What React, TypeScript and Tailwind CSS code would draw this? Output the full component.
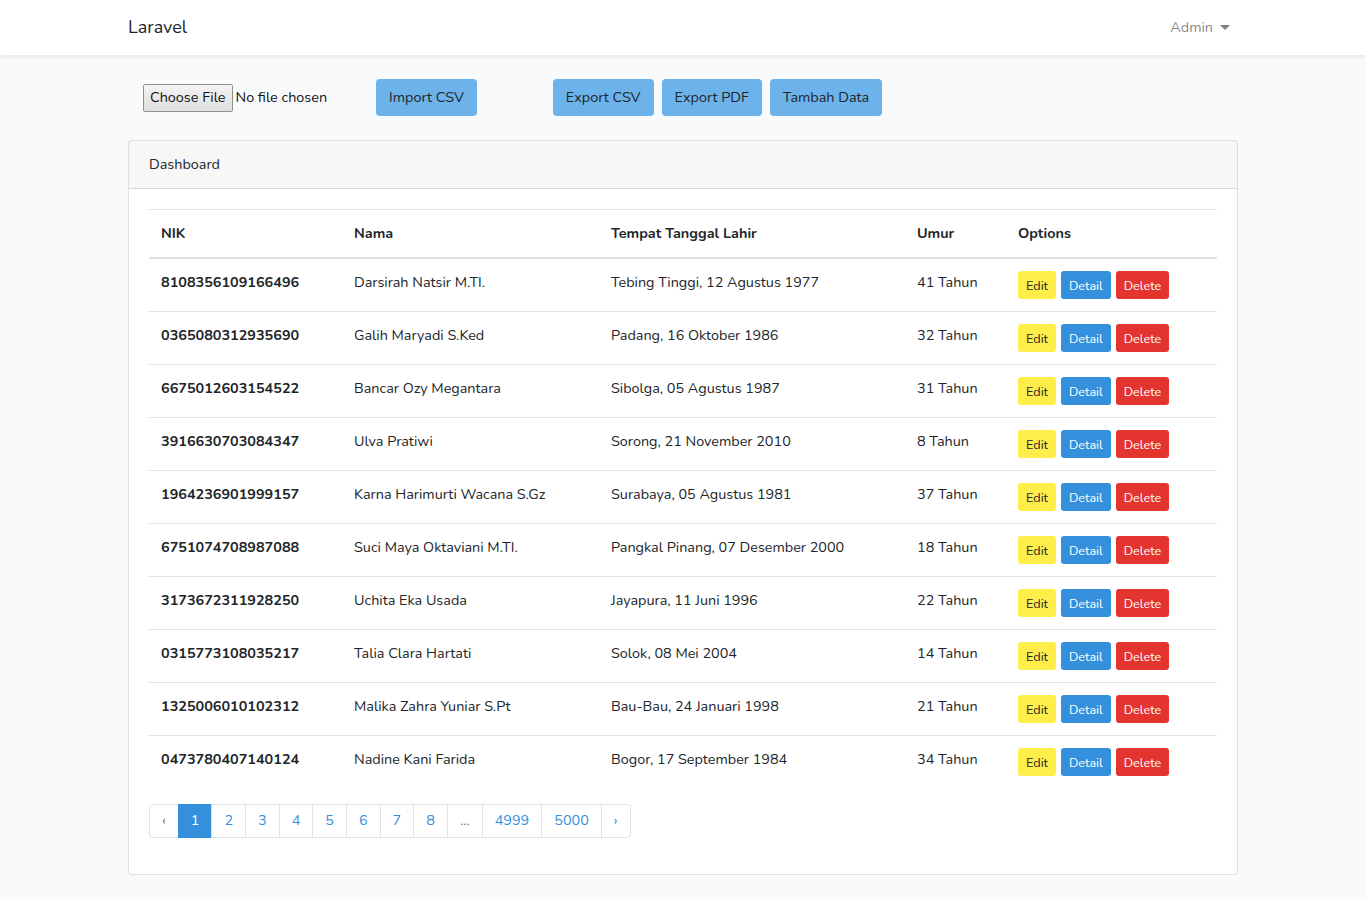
const rows = [
  ["8108356109166496", "Darsirah Natsir M.TI.", "Tebing Tinggi, 12 Agustus 1977", "41 Tahun"],
  ["0365080312935690", "Galih Maryadi S.Ked", "Padang, 16 Oktober 1986", "32 Tahun"],
  ["6675012603154522", "Bancar Ozy Megantara", "Sibolga, 05 Agustus 1987", "31 Tahun"],
  ["3916630703084347", "Ulva Pratiwi", "Sorong, 21 November 2010", "8 Tahun"],
  ["1964236901999157", "Karna Harimurti Wacana S.Gz", "Surabaya, 05 Agustus 1981", "37 Tahun"],
  ["6751074708987088", "Suci Maya Oktaviani M.TI.", "Pangkal Pinang, 07 Desember 2000", "18 Tahun"],
  ["3173672311928250", "Uchita Eka Usada", "Jayapura, 11 Juni 1996", "22 Tahun"],
  ["0315773108035217", "Talia Clara Hartati", "Solok, 08 Mei 2004", "14 Tahun"],
  ["1325006010102312", "Malika Zahra Yuniar S.Pt", "Bau-Bau, 24 Januari 1998", "21 Tahun"],
  ["0473780407140124", "Nadine Kani Farida", "Bogor, 17 September 1984", "34 Tahun"],
];

const pages = ["1", "2", "3", "4", "5", "6", "7", "8", "...", "4999", "5000"];

function InfoBtn({ children, className = "" }: { children: React.ReactNode; className?: string }) {
  return (
    <button className={`h-[37px] px-[13px] rounded-[4px] bg-[#6cb2eb] text-[#212529] text-[14.4px] leading-[23px] ${className}`}>
      {children}
    </button>
  );
}

export default function App() {
  return (
    <div
      className="min-h-screen bg-[#f8fafc] text-[#212529] text-[14.4px]"
      style={{ fontFamily: "Nunito, Lato, 'Noto Sans', sans-serif" }}
    >
      <nav className="h-[55px] bg-white shadow-[0_2px_4px_rgba(0,0,0,0.075)]">
        <div className="w-[1110px] mx-auto h-full flex items-center justify-between">
          <span className="text-[18px] text-[#212529]">Laravel</span>
          <span className="flex items-center gap-[6px] pr-2 text-[rgba(0,0,0,0.5)]">
            Admin
            <span className="w-0 h-0 border-x-[5px] border-x-transparent border-t-[5px] border-t-[rgba(0,0,0,0.5)] ml-[1px]" />
          </span>
        </div>
      </nav>

      <main className="w-[1110px] mx-auto pt-6">
        <div className="flex items-center h-[37px]">
          <div className="flex items-center ml-[15px] w-[233px]">
            <span className="h-[28px] px-[6px] flex items-center border border-[#8f8f8f] rounded-[2px] bg-gradient-to-b from-[#f4f4f4] to-[#dedede] text-[#111]">
              Choose File
            </span>
            <span className="ml-[3px] text-[#111]">No file chosen</span>
          </div>
          <InfoBtn>Import CSV</InfoBtn>
          <InfoBtn className="ml-[76px]">Export CSV</InfoBtn>
          <InfoBtn className="ml-2">Export PDF</InfoBtn>
          <InfoBtn className="ml-2">Tambah Data</InfoBtn>
        </div>

        <div className="mt-6 bg-white border border-[rgba(0,0,0,0.125)] rounded-[4px]">
          <div className="h-[48px] px-5 flex items-center bg-[rgba(0,0,0,0.03)] border-b border-[rgba(0,0,0,0.125)]">
            Dashboard
          </div>
          <div className="p-5">
            <table className="w-full border-collapse mb-4 table-fixed">
              <colgroup>
                <col className="w-[193px]" />
                <col className="w-[257px]" />
                <col className="w-[306px]" />
                <col className="w-[101px]" />
                <col />
              </colgroup>
              <thead>
                <tr className="border-t border-[#dee2e6] border-b-2">
                  <th className="p-3 text-left font-bold leading-[23px] align-bottom">NIK</th>
                  <th className="p-3 text-left font-bold leading-[23px] align-bottom">Nama</th>
                  <th className="p-3 text-left font-bold leading-[23px] align-bottom">Tempat Tanggal Lahir</th>
                  <th className="p-3 text-left font-bold leading-[23px] align-bottom">Umur</th>
                  <th className="p-3 text-left font-bold leading-[23px] align-bottom">Options</th>
                </tr>
              </thead>
              <tbody>
                {rows.map((r) => (
                  <tr key={r[0]} className="border-t border-[#dee2e6]">
                    <th className="p-3 text-left font-bold leading-[23px] align-top">{r[0]}</th>
                    <td className="p-3 leading-[23px] align-top">{r[1]}</td>
                    <td className="p-3 leading-[23px] align-top">{r[2]}</td>
                    <td className="p-3 leading-[23px] align-top">{r[3]}</td>
                    <td className="p-3 leading-[23px] align-top">
                      <div className="flex gap-[5px]">
                        <button className="h-[28px] px-2 rounded-[3px] bg-[#ffed4a] text-[#212529] text-[12.6px]">Edit</button>
                        <button className="h-[28px] px-2 rounded-[3px] bg-[#3490dc] text-white text-[12.6px]">Detail</button>
                        <button className="h-[28px] px-2 rounded-[3px] bg-[#e3342f] text-white text-[12.6px]">Delete</button>
                      </div>
                    </td>
                  </tr>
                ))}
              </tbody>
            </table>

            <ul className="flex h-[34px] mb-4">
              <li className="px-3 flex items-center border border-[#dee2e6] rounded-l-[4px] text-[#6c757d]">‹</li>
              {pages.map((p) => (
                <li
                  key={p}
                  className={
                    p === "1"
                      ? "px-3 flex items-center -ml-px border border-[#3490dc] bg-[#3490dc] text-white"
                      : p === "..."
                      ? "px-3 flex items-center -ml-px border border-[#dee2e6] text-[#6c757d]"
                      : "px-3 flex items-center -ml-px border border-[#dee2e6] text-[#3490dc]"
                  }
                >
                  {p}
                </li>
              ))}
              <li className="px-3 flex items-center -ml-px border border-[#dee2e6] rounded-r-[4px] text-[#3490dc]">›</li>
            </ul>
          </div>
        </div>
      </main>
    </div>
  );
}
